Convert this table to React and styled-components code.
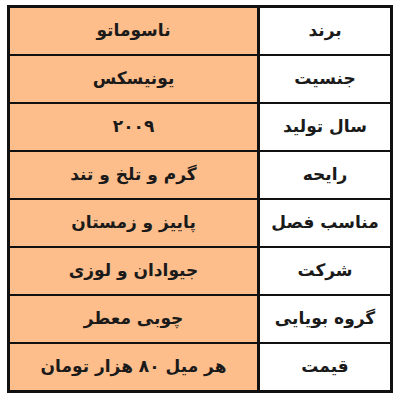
import styled, { createGlobalStyle } from "styled-components";

const GlobalStyle = createGlobalStyle`
  body {
    margin: 0;
    background: #ffffff;
    font-family: "DejaVu Sans", "Noto Sans", sans-serif;
  }
`;

// مشخصات محصول
const rows = [
  { label: "برند", value: "ناسوماتو" },
  { label: "جنسیت", value: "یونیسکس" },
  { label: "سال تولید", value: "۲۰۰۹" },
  { label: "رایحه", value: "گرم و تلخ و تند" },
  { label: "مناسب فصل", value: "پاییز و زمستان" },
  { label: "شرکت", value: "جیوادان و لوزی" },
  { label: "گروه بویایی", value: "چوبی معطر" },
  { label: "قیمت", value: "هر میل ۸۰ هزار تومان" },
];

const App = () => {
  return (
    <>
      <GlobalStyle />
      <Page>
        <Table>
          {rows.map((row) => (
            <Row key={row.label}>
              <Cell>{row.label}</Cell>
              <Cell $accent>{row.value}</Cell>
            </Row>
          ))}
        </Table>
      </Page>
    </>
  );
};

const Page = styled.div`
  width: 400px;
  height: 400px;
  padding: 5px 7px 7px 7px;
  box-sizing: border-box;
`;

const Table = styled.div`
  direction: rtl;
  height: 100%;
  display: grid;
  grid-template-rows: repeat(8, 1fr);
  gap: 2px;
  background: #111111;
  border: 3px solid #111111;
  box-sizing: border-box;
`;

const Row = styled.div`
  display: grid;
  grid-template-columns: 130px 1fr;
  gap: 3px;
`;

const Cell = styled.div`
  display: flex;
  align-items: center;
  justify-content: center;
  background: ${(p) => (p.$accent ? "#fdbe8b" : "#ffffff")};
  color: #1a1a1a;
  font-size: 17px;
  font-weight: 700;
  padding-bottom: 2px;
`;

export default App;
